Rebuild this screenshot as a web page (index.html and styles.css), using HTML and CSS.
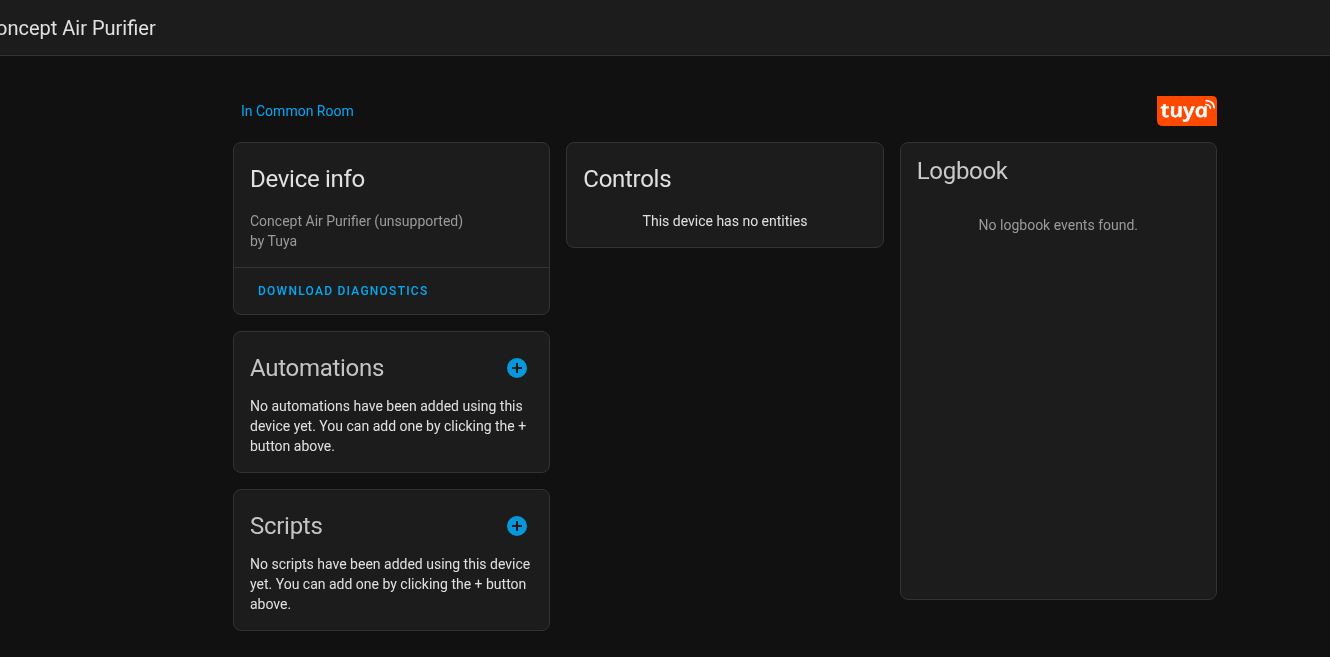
FILE: index.html
```
<!DOCTYPE html>
<html lang="en">
<head>
    <meta charset="UTF-8">
    <meta name="viewport" content="width=device-width, initial-scale=1.0">
    <title>Concept Air Purifier</title>
    <link rel="stylesheet" href="styles.css">
</head>
<body>
    <!-- Toolbar -->
    <header class="toolbar">
        <div class="main-title">Concept Air Purifier</div>
    </header>

    <main class="container">
        <!-- Area and brand -->
        <div class="page-header">
            <a class="area" href="#">In Common Room</a>
            <svg class="brand" viewBox="0 0 60 30" role="img" aria-label="Tuya">
                <path fill="#ff4800" d="M0 0h55q5 0 5 5v25H6q-6 0-6-6z"/>
                <text class="brand-text" transform="translate(4.8 20.8) skewX(12)" textLength="47.5" lengthAdjust="spacingAndGlyphs">tuya</text>
                <path class="brand-wave" d="M49 8.500q4 .3 4.400 3.600M49.200 4.600q7.400 .4 8 7"/>
            </svg>
        </div>

        <div class="columns">
            <div class="column">
                <section class="card">
                    <h1 class="card-header">Device info</h1>
                    <div class="card-content secondary">
                        <div>Concept Air Purifier (unsupported)</div>
                        <div>by Tuya</div>
                    </div>
                    <div class="card-actions">
                        <a class="button" href="#">Download diagnostics</a>
                    </div>
                </section>

                <section class="card">
                    <h1 class="card-header with-button">
                        Automations
                        <button class="icon-button" aria-label="Add automation">
                            <svg viewBox="0 0 24 24"><path d="M17,13H13V17H11V13H7V11H11V7H13V11H17M12,2A10,10 0 0,0 2,12A10,10 0 0,0 12,22A10,10 0 0,0 22,12A10,10 0 0,0 12,2Z"/></svg>
                        </button>
                    </h1>
                    <div class="card-content">No automations have been added using this device yet. You can add one by clicking the + button above.</div>
                </section>

                <section class="card">
                    <h1 class="card-header with-button">
                        Scripts
                        <button class="icon-button" aria-label="Add script">
                            <svg viewBox="0 0 24 24"><path d="M17,13H13V17H11V13H7V11H11V7H13V11H17M12,2A10,10 0 0,0 2,12A10,10 0 0,0 12,22A10,10 0 0,0 22,12A10,10 0 0,0 12,2Z"/></svg>
                        </button>
                    </h1>
                    <div class="card-content">No scripts have been added using this device yet. You can add one by clicking the + button above.</div>
                </section>
            </div>

            <div class="column">
                <section class="card">
                    <h1 class="card-header">Controls</h1>
                    <div class="card-content empty">This device has no entities</div>
                </section>
            </div>

            <div class="column">
                <section class="card logbook">
                    <h1 class="card-header">Logbook</h1>
                    <div class="no-entries">No logbook events found.</div>
                </section>
            </div>
        </div>
    </main>
</body>
</html>
```
FILE: styles.css
```
* {
    margin: 0;
    padding: 0;
    box-sizing: border-box;
}

body {
    font-family: Roboto, sans-serif;
    font-size: 14px;
    line-height: 20px;
    background: #111111;
    color: #e1e1e1;
    overflow: hidden;
}

/* Toolbar */
.toolbar {
    display: flex;
    align-items: center;
    height: 56px;
    background: #1c1c1c;
    border-bottom: 1px solid #333333;
}

.main-title {
    margin-left: -17.5px;
    font-size: 20px;
    white-space: nowrap;
    will-change: transform;
}

/* Page */
.container {
    width: 984px;
    margin: 40px auto 0 233px;
    will-change: transform;
}

.page-header {
    display: flex;
    align-items: center;
    justify-content: space-between;
    height: 30px;
    padding-left: 8px;
    margin-bottom: 16px;
}

.area {
    color: #03a9f4;
    text-decoration: none;
}

.brand {
    display: block;
    width: 60px;
    height: 30px;
    overflow: visible;
}

.brand-text {
    font-family: "Open Sans", sans-serif;
    font-size: 19.5px;
    font-style: italic;
    font-weight: 600;
    fill: #ffffff;
    stroke: #ffffff;
    stroke-width: 0.4;
    stroke-linejoin: round;
}

.brand-wave {
    fill: none;
    stroke: #ffffff;
    stroke-width: 1.7;
    stroke-linecap: round;
}

.columns {
    display: grid;
    grid-template-columns: repeat(3, 1fr);
    gap: 16px;
    align-items: start;
}

.column {
    display: flex;
    flex-direction: column;
    gap: 16px;
}

/* Cards */
.card {
    background: #1c1c1c;
    border: 1px solid #333333;
    border-radius: 8px;
}

.card-header {
    padding: 12px 16px 8px;
    font-size: 24px;
    font-weight: 400;
    line-height: 48px;
    letter-spacing: -0.012em;
}

.card-header.with-button {
    display: flex;
    align-items: center;
    justify-content: space-between;
    padding: 12px 8px 4px 16px;
    color: #c4c4c4;
}

.card-content {
    padding: 0 16px 16px;
}

.secondary {
    color: #9b9b9b;
}

.empty {
    text-align: center;
}

.card-actions {
    border-top: 1px solid #333333;
    padding: 5px 16px;
}

.button {
    display: inline-block;
    padding: 0 8px;
    color: #03a9f4;
    font-size: 12px;
    font-weight: 500;
    line-height: 36px;
    letter-spacing: 1.25px;
    text-decoration: none;
    text-transform: uppercase;
    vertical-align: top;
}

.icon-button {
    width: 48px;
    height: 48px;
    padding: 12px;
    background: none;
    border: none;
    cursor: pointer;
}

.icon-button svg {
    display: block;
    width: 24px;
    height: 24px;
    fill: #0798db;
}

/* Logbook */
.logbook {
    height: 458px;
}

.logbook .card-header {
    padding: 4px 16px 0;
    color: #c9c9c9;
}

.no-entries {
    padding: 20px 16px 16px;
    color: #9b9b9b;
    text-align: center;
}
```
